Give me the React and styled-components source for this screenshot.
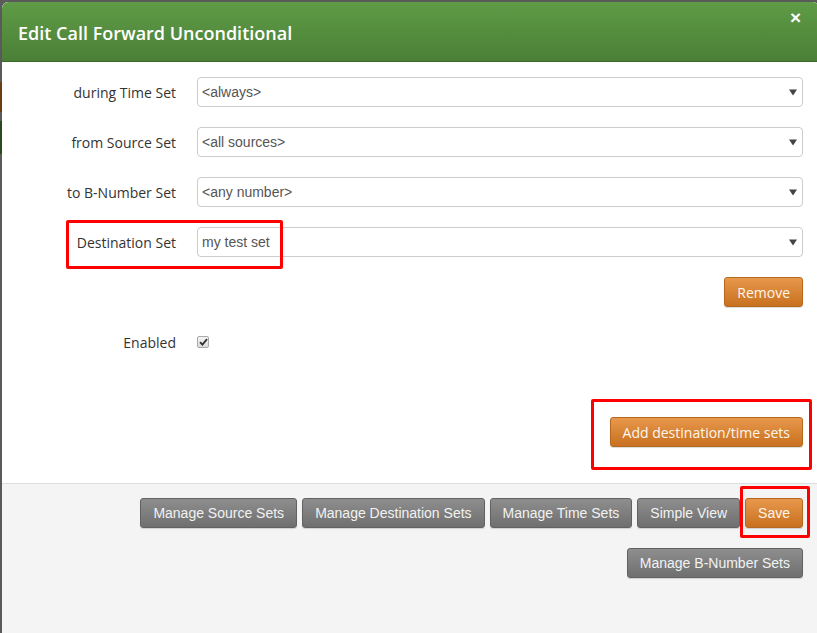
import React from "react";
import styled, { createGlobalStyle } from "styled-components";

const Global = createGlobalStyle`
  html, body { margin: 0; padding: 0; }
  body {
    width: 817px;
    height: 633px;
    overflow: hidden;
    background: linear-gradient(to bottom,
      #5a5a5a 0px, #5a5a5a 82px,
      #6b3d12 82px, #6b3d12 112px,
      #5a5a5a 112px, #5a5a5a 121px,
      #2b4a20 121px, #2b4a20 154px,
      #5a5a5a 154px, #5a5a5a 100%);
    font-family: "Open Sans", "Liberation Sans", sans-serif;
  }
`;

const Page = styled.div`
  position: relative;
  width: 817px;
  height: 633px;
  overflow: hidden;
  padding: 2px 0 0 2px;
  box-sizing: border-box;
`;

const Modal = styled.div`
  width: 817px;
  height: 640px;
  background: #fff;
  border-radius: 6px 6px 0 0;
  display: flex;
  flex-direction: column;
  overflow: hidden;
`;

const Header = styled.div`
  flex: none;
  display: flex;
  justify-content: space-between;
  align-items: center;
  padding: 2px 18px 0 16px;
  box-sizing: border-box;
  height: 60px;
  background: linear-gradient(to bottom, #5f9c46, #4b7f37);
  border-bottom: 1px solid #3c6a2b;
  border-radius: 6px 6px 0 0;
`;

const Title = styled.h3`
  margin: 0;
  color: #fff;
  font-family: "Open Sans", sans-serif;
  font-weight: 600;
  font-size: 18px;
  line-height: 24px;
`;

const Close = styled.span`
  align-self: flex-start;
  margin-top: 4px;
  color: #fff;
  font-family: "Liberation Sans", Arial, sans-serif;
  font-weight: bold;
  font-size: 19px;
  line-height: 20px;
`;

const Body = styled.div`
  padding: 15px 16px 36px 16px;
  display: flex;
  flex-direction: column;
  gap: 20px;
`;

const Row = styled.div`
  display: grid;
  grid-template-columns: 158px 1fr;
  column-gap: 21px;
  align-items: center;
  min-height: 30px;
  margin-top: ${(p) => p.$extra || 0}px;
`;

const Label = styled.label`
  text-align: right;
  color: #333;
  font-size: 14px;
  font-family: "Open Sans", sans-serif;
`;

const Select = styled.div`
  height: 30px;
  box-sizing: border-box;
  border: 1px solid #ccc;
  border-radius: 4px;
  background: #fff;
  display: flex;
  align-items: center;
  justify-content: space-between;
  padding: 0 5px 0 4px;
  font-family: "Liberation Sans", Arial, sans-serif;
  font-size: 14px;
  color: #555;
`;

const Arrow = () => (
  <svg width="8" height="7" viewBox="0 0 8 7">
    <path d="M0 0.5 H8 L4 6.5 Z" fill="#444" />
  </svg>
);

const Right = styled.div`
  display: flex;
  justify-content: flex-end;
  grid-column: 1 / -1;
`;

const Btn = styled.button`
  height: 30px;
  box-sizing: border-box;
  padding: 0 12px;
  border-radius: 3px;
  font-size: 14px;
  cursor: pointer;
  white-space: nowrap;
  font-family: ${(p) =>
    p.$open ? '"Open Sans", sans-serif' : '"Liberation Sans", Arial, sans-serif'};
  ${(p) =>
    p.$variant === "orange"
      ? `
    color: #fff6ec;
    background: linear-gradient(to bottom, #e8984c, #c8701f);
    border: 1px solid #b5691f;
  `
      : `
    color: #f2f2f2;
    background: linear-gradient(to bottom, #8e8e8e, #6f6f6f);
    border: 1px solid #626262;
  `}
  box-shadow: 0 1px 1px rgba(0,0,0,0.15);
`;

const Check = styled.span`
  width: 12px;
  height: 12px;
  box-sizing: border-box;
  border: 1px solid #a9a9a9;
  border-radius: 2px;
  background: linear-gradient(to bottom, #f4f4f4, #dcdcdc);
  display: flex;
  align-items: center;
  justify-content: center;
`;

const Footer = styled.div`
  flex: 1;
  background: #f4f4f4;
  border-top: 1px solid #dddddd;
  padding: 14px 16px 0 15px;
  display: flex;
  flex-direction: column;
  gap: 20px;
`;

const FooterRow = styled.div`
  display: flex;
  justify-content: flex-end;
  gap: 5px;
`;

const Mark = styled.div`
  position: absolute;
  border: 3px solid #ff0000;
  border-radius: 2px;
  box-sizing: border-box;
  pointer-events: none;
`;

const fields = [
  ["during Time Set", "<always>"],
  ["from Source Set", "<all sources>"],
  ["to B-Number Set", "<any number>"],
  ["Destination Set", "my test set"],
];

export default function App() {
  return (
    <>
      <Global />
      <Page>
        <Modal>
          <Header>
            <Title>Edit Call Forward Unconditional</Title>
            <Close>×</Close>
          </Header>
          <Body>
            {fields.map(([l, v]) => (
              <Row key={l}>
                <Label>{l}</Label>
                <Select>
                  <span>{v}</span>
                  <Arrow />
                </Select>
              </Row>
            ))}
            <Row>
              <Right>
                <Btn $variant="orange" $open>Remove</Btn>
              </Right>
            </Row>
            <Row>
              <Label>Enabled</Label>
              <Check>
                <svg width="9" height="8" viewBox="0 0 9 8">
                  <path d="M1 4.2 L3.4 6.6 L8 1.2" fill="none" stroke="#333" strokeWidth="1.8" />
                </svg>
              </Check>
            </Row>
            <Row $extra={40}>
              <Right>
                <Btn $variant="orange" $open>Add destination/time sets</Btn>
              </Right>
            </Row>
          </Body>
          <Footer>
            <FooterRow>
              <Btn>Manage Source Sets</Btn>
              <Btn>Manage Destination Sets</Btn>
              <Btn>Manage Time Sets</Btn>
              <Btn>Simple View</Btn>
              <Btn $variant="orange">Save</Btn>
            </FooterRow>
            <FooterRow>
              <Btn>Manage B-Number Sets</Btn>
            </FooterRow>
          </Footer>
        </Modal>
        <Mark style={{ left: 66, top: 220, width: 217, height: 49 }} />
        <Mark style={{ left: 591, top: 399, width: 221, height: 71 }} />
        <Mark style={{ left: 740, top: 486, width: 70, height: 52 }} />
      </Page>
    </>
  );
}
